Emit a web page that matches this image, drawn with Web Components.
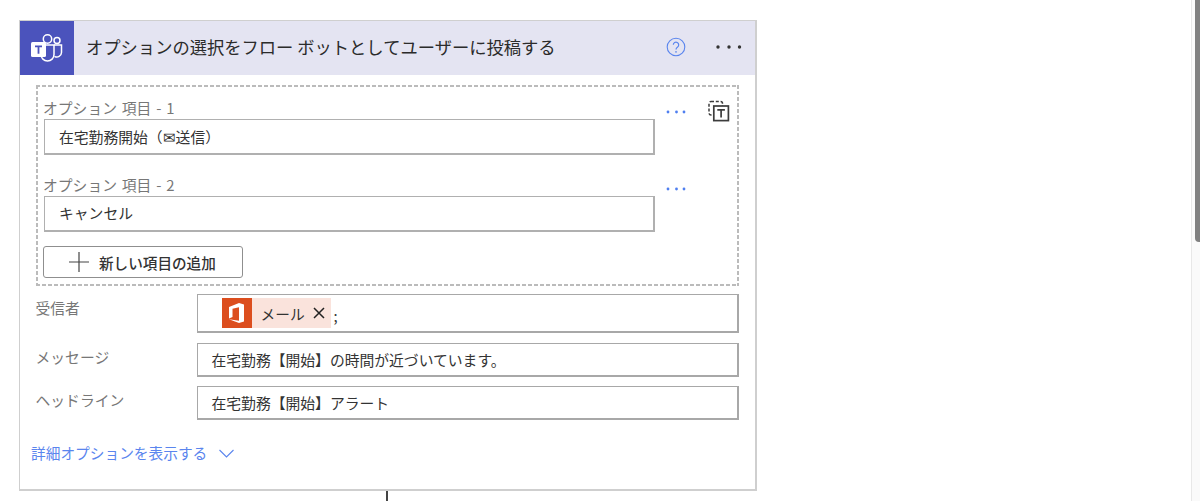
<!DOCTYPE html>
<html lang="ja">
<head>
<meta charset="utf-8">
<title>Flow card</title>
<style>
  html, body { margin: 0; padding: 0; background: #fff; }
  body { font-family: "Noto Sans CJK JP", "Noto Sans", sans-serif; color: #333; overflow: hidden; }
</style>
</head>
<body>
<flow-page>
  <flow-card title-text="オプションの選択をフロー ボットとしてユーザーに投稿する">
    <dashed-group>
      <option-item label="オプション 項目 - 1" value="在宅勤務開始（✉送信）" removable></option-item>
      <option-item label="オプション 項目 - 2" value="キャンセル"></option-item>
      <add-button>新しい項目の追加</add-button>
    </dashed-group>
    <field-row label="受信者" kind="tall"><mail-token>メール</mail-token><span style="padding-top:5px">;</span></field-row>
    <field-row label="メッセージ">在宅勤務【開始】の時間が近づいています。</field-row>
    <field-row label="ヘッドライン">在宅勤務【開始】アラート</field-row>
    <more-options>詳細オプションを表示する</more-options>
  </flow-card>
</flow-page>

<script>
class FlowPage extends HTMLElement {
  constructor() {
    super();
    this.attachShadow({ mode: 'open' });
    this.shadowRoot.innerHTML = `
      <style>
        :host { display: flex; width: 1200px; height: 501px; overflow: hidden; }
        main { flex: 1; padding: 20px 0 0 19px; }
        #line { width: 2px; height: 10px; background: #444; margin-left: 367px; }
        #track { width: 9px; box-sizing: border-box; border-left: 1px solid #e8e8e8; background: #fafafa; padding-left: 3px; }
        #thumb { width: 5px; height: 242px; background: #808080; border-bottom-left-radius: 4px; }
      </style>
      <main><slot></slot><div id="line"></div></main>
      <div id="track"><div id="thumb"></div></div>
    `;
  }
}

class FlowCard extends HTMLElement {
  constructor() {
    super();
    this.attachShadow({ mode: 'open' });
    this.shadowRoot.innerHTML = `
      <style>
        :host { display: block; width: 738px; height: 471px; box-sizing: border-box; border: 1px solid #cfcfcf; border-width: 1px 2px 2px 1px; }
        header { display: flex; align-items: center; height: 54px; background: #e4e4f2; }
        #logo { width: 54px; height: 54px; background: #4b53bc; display: flex; align-items: center; justify-content: center; flex: none; }
        h1 { flex: 1; margin: 0 0 0 12px; padding-bottom: 3px; font-size: 17.3px; font-weight: 400; color: #2b2b2b; white-space: nowrap; }
        #help { margin: 0 30px 2px 0; display: block; }
        #menu { margin: 0 13px 2px 0; display: block; }
        section { padding: 10px 17px 0 16px; }
      </style>
      <header>
        <div id="logo">
          <svg width="36" height="32" viewBox="0 0 36 32" fill="none">
            <circle cx="18.5" cy="7" r="4.2" stroke="#fff" stroke-width="1.5"/>
            <circle cx="28" cy="8.5" r="3" stroke="#fff" stroke-width="1.5"/>
            <path d="M12 13h13v9.5a6.5 6.5 0 0 1-13 0z" stroke="#fff" stroke-width="1.5"/>
            <path d="M25 13h7.5v7.5a4.6 4.6 0 0 1-7 3.8" stroke="#fff" stroke-width="1.5"/>
            <rect x="2" y="10" width="15" height="15" rx="1.5" fill="#fff"/>
            <path d="M6 13.5h7v1.7h-2.6v6.5H8.6v-6.5H6z" fill="#4b53bc"/>
          </svg>
        </div>
        <h1></h1>
        <svg id="help" width="20" height="20" viewBox="0 0 20 20" fill="none">
          <circle cx="10" cy="10" r="8.8" stroke="#5a85ee" stroke-width="1.1"/>
          <path d="M7.3 7.8a2.7 2.7 0 1 1 4.3 2.2c-1 .7-1.6 1.2-1.6 2.6" stroke="#5a85ee" stroke-width="1.2"/>
          <circle cx="10" cy="14.9" r=".8" fill="#5a85ee"/>
        </svg>
        <svg id="menu" width="26" height="4" viewBox="0 0 26 4" fill="#333">
          <circle cx="2" cy="2" r="1.7"/><circle cx="13" cy="2" r="1.7"/><circle cx="23.5" cy="2" r="1.7"/>
        </svg>
      </header>
      <section><slot></slot></section>
    `;
    this.shadowRoot.querySelector('h1').textContent = this.getAttribute('title-text');
  }
}

class DashedGroup extends HTMLElement {
  constructor() {
    super();
    this.attachShadow({ mode: 'open' });
    this.shadowRoot.innerHTML = `
      <style>
        :host {
          --dash: #bbb;
          display: block; box-sizing: border-box; width: 703px; height: 201px; padding: 15px 0 0 8px; margin-bottom: 8px;
          background:
            repeating-linear-gradient(90deg, var(--dash) 0 4px, transparent 4px 6px) left top / 100% 2px no-repeat,
            repeating-linear-gradient(90deg, var(--dash) 0 4px, transparent 4px 6px) left bottom / 100% 2px no-repeat,
            repeating-linear-gradient(180deg, var(--dash) 0 4px, transparent 4px 6px) left top / 2px 100% no-repeat,
            repeating-linear-gradient(180deg, var(--dash) 0 4px, transparent 4px 6px) right top / 2px 100% no-repeat;
        }
      </style>
      <slot></slot>
    `;
  }
}

class OptionItem extends HTMLElement {
  constructor() {
    super();
    this.attachShadow({ mode: 'open' });
    this.shadowRoot.innerHTML = `
      <style>
        :host { display: grid; grid-template-columns: 611px 54px 1fr; height: 77px; }
        :host(:not([removable])) { height: 69px; }
        #label { font-size: 14.8px; word-spacing: 1.5px; line-height: 16px; color: #777; height: 16px; margin-left: -1px; white-space: nowrap; }
        #box { box-sizing: border-box; height: 36px; margin-top: 3px; border: 2px solid #b0b0b0; border-width: 1px 2px 2px 1px; padding-left: 14px; font-size: 14.8px; line-height: 33px; color: #333; white-space: nowrap; }
        :host(:not([removable])) #box { line-height: 32px; }
        #dots { display: block; margin: 10px 0 0 11px; }
        #trash { display: block; margin: 0 0 0 -1px; }
      </style>
      <div><div id="label"></div><div id="box"></div></div>
      <svg id="dots" width="20" height="4" viewBox="0 0 20 4" fill="#4f7ff0">
        <circle cx="2" cy="2" r="1.4"/><circle cx="10.5" cy="2" r="1.4"/><circle cx="18" cy="2" r="1.4"/>
      </svg>
      ${this.hasAttribute('removable') ? `
      <svg id="trash" width="22" height="22" viewBox="0 0 22 22" fill="none" stroke="#3c3c3c">
        <rect x="1" y="1.5" width="13.5" height="13.5" rx="2" stroke-width="1.5" stroke-dasharray="3 1.8"/>
        <rect x="5.8" y="6" width="14.6" height="14.6" stroke-width="1.7" fill="#fff"/>
        <path d="M9.3 9.8h7.6M13.1 9.8v7.6" stroke-width="1.7"/>
      </svg>` : ''}
    `;
    this.shadowRoot.querySelector('#label').textContent = this.getAttribute('label');
    this.shadowRoot.querySelector('#box').textContent = this.getAttribute('value');
  }
}

class AddButton extends HTMLElement {
  constructor() {
    super();
    this.attachShadow({ mode: 'open' });
    this.shadowRoot.innerHTML = `
      <style>
        :host { display: flex; align-items: center; box-sizing: border-box; width: 200px; height: 32px; margin-left: -1px; border: 1px solid #8f8f8f; border-radius: 3px; padding-left: 25px; font-size: 14.6px; font-weight: 500; color: #333; }
        svg { display: block; margin-right: 10px; }
      </style>
      <svg width="20" height="20" viewBox="0 0 20 20" stroke="#444" stroke-width="1.2"><path d="M0 10h20M10 0v20"/></svg>
      <slot></slot>
    `;
  }
}

class FieldRow extends HTMLElement {
  constructor() {
    super();
    this.attachShadow({ mode: 'open' });
    const tall = this.getAttribute('kind') === 'tall';
    this.shadowRoot.innerHTML = `
      <style>
        :host { display: flex; width: 703px; margin-bottom: ${tall ? 10 : 9}px; }
        #label { width: 161px; flex: none; font-size: 14.8px; line-height: 20px; color: #777; padding-top: 4px; margin-left: -0.5px; white-space: nowrap; }
        #box { flex: 1; box-sizing: border-box; height: ${tall ? 39 : 34}px; display: flex; align-items: center; gap: 3px; border: 1px solid #a8a8a8; border-width: 1px 2px 2px 1px; padding-left: ${tall ? 24 : 14}px; font-size: 14.8px; color: #333; white-space: nowrap; }
      </style>
      <div id="label"></div>
      <div id="box"><slot></slot></div>
    `;
    this.shadowRoot.querySelector('#label').textContent = this.getAttribute('label');
  }
}

class MailToken extends HTMLElement {
  constructor() {
    super();
    this.attachShadow({ mode: 'open' });
    this.shadowRoot.innerHTML = `
      <style>
        :host { display: flex; align-items: center; height: 30px; background: #fae3dc; font-size: 14.7px; color: #333; }
        #logo { width: 30px; height: 30px; background: #dc4e1e; display: flex; align-items: center; justify-content: center; margin-right: 9px; }
        #close { display: block; margin: 0 6px 0 8px; }
      </style>
      <div id="logo">
        <svg width="16" height="20" viewBox="0 0 16 20" fill="#fff">
          <path d="M0 4 10 0l5 1.5v17L10 20 0 16.3l10 1.4V4.3L3.5 5.8v8.3L0 15.5z"/>
        </svg>
      </div>
      <slot></slot>
      <svg id="close" width="12" height="12" viewBox="0 0 12 12" stroke="#222" stroke-width="1.5"><path d="M1 1l10 10M11 1L1 11"/></svg>
    `;
  }
}

class MoreOptions extends HTMLElement {
  constructor() {
    super();
    this.attachShadow({ mode: 'open' });
    this.shadowRoot.innerHTML = `
      <style>
        :host { display: flex; align-items: center; margin: 22px 0 0 -5px; font-size: 14.7px; line-height: 22px; color: #5a85ee; white-space: nowrap; }
        svg { display: block; margin-left: 12px; }
      </style>
      <slot></slot>
      <svg width="15" height="9" viewBox="0 0 15 9" fill="none" stroke="#5a85ee" stroke-width="1.1"><path d="M.5 1l7 7 7-7"/></svg>
    `;
  }
}

customElements.define('flow-page', FlowPage);
customElements.define('flow-card', FlowCard);
customElements.define('dashed-group', DashedGroup);
customElements.define('option-item', OptionItem);
customElements.define('add-button', AddButton);
customElements.define('field-row', FieldRow);
customElements.define('mail-token', MailToken);
customElements.define('more-options', MoreOptions);
</script>
</body>
</html>
